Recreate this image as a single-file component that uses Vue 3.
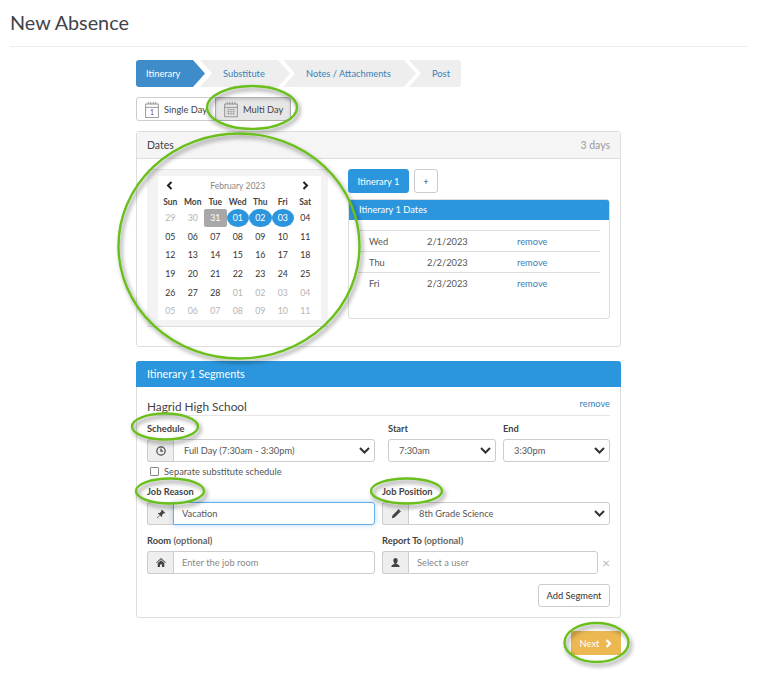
<template>
  <div class="page">
    <h1 class="title">New Absence</h1>

    <div class="main">
      <div class="wizard">
        <div
          v-for="(step, i) in steps"
          :key="step.label"
          class="step"
          :class="{ active: i === 0, last: i === steps.length - 1 }"
          :style="{ width: step.width + 'px' }"
        >{{ step.label }}</div>
      </div>

      <div class="toggle">
        <button class="toggle-btn single">
          <svg width="14" height="17" viewBox="0 0 16 20" fill="none" stroke="#888">
            <path d="M.5 3.5h15v16H.5zM.5 7.5h15" />
            <path d="M3.5 1v3M6.5 1v3M9.5 1v3M12.5 1v3" />
            <text x="8" y="17" font-size="8" text-anchor="middle" fill="#555" stroke="none">1</text>
          </svg>
          Single Day
        </button>
        <button class="toggle-btn multi">
          <svg width="14" height="17" viewBox="0 0 16 20" fill="none" stroke="#888">
            <path d="M.5 3.5h15v15H.5zM.5 7.5h15" />
            <path d="M3.5 1v3M6.5 1v3M9.5 1v3M12.5 1v3" />
            <path d="M3 10h10M3 12.5h10M3 15h10M5 9v7.5M8 9v7.5M11 9v7.5" stroke="#aaa" />
          </svg>
          Multi Day
        </button>
      </div>

      <section class="panel dates">
        <header class="panel-head">
          <span>Dates</span>
          <span class="days">3 days</span>
        </header>
        <div class="dates-body">
          <div class="cal-wrap">
            <div class="cal">
              <div class="cal-nav">
                <svg class="chev" width="7" height="9" viewBox="0 0 7 9"><path d="M5.5 1 2 4.5 5.5 8" /></svg>
                <span>February 2023</span>
                <svg class="chev" width="7" height="9" viewBox="0 0 7 9"><path d="M1.5 1 5 4.5 1.5 8" /></svg>
              </div>
              <div class="cal-grid">
                <div v-for="d in weekdays" :key="d" class="dow">{{ d }}</div>
                <div
                  v-for="(c, i) in cells"
                  :key="i"
                  class="day"
                  :class="c.cls"
                >{{ c.text }}</div>
              </div>
            </div>
          </div>

          <div class="itin">
            <div class="tabs">
              <button class="tab on">Itinerary 1</button>
              <button class="tab">+</button>
            </div>
            <div class="itin-panel">
              <div class="itin-head">Itinerary 1 Dates</div>
              <div class="itin-rows">
                <div v-for="r in itinerary" :key="r.date" class="itin-row">
                  <span class="c-day">{{ r.day }}</span>
                  <span class="c-date">{{ r.date }}</span>
                  <a class="link">remove</a>
                </div>
              </div>
            </div>
          </div>
        </div>
      </section>

      <section class="panel segments">
        <header class="seg-head">Itinerary 1 Segments</header>
        <div class="seg-body">
          <div class="school">
            <span>Hagrid High School</span>
            <a class="link">remove</a>
          </div>

          <div class="row sched">
            <div class="field">
              <label>Schedule</label>
              <div class="group">
                <span class="addon">
                  <svg width="10" height="10" viewBox="0 0 12 12" fill="none" stroke="#444" stroke-width="1.4"><circle cx="6" cy="6" r="5" /><path d="M6 3v3.2h2.3" /></svg>
                </span>
                <div class="sel">Full Day (7:30am - 3:30pm)<svg class="caret" width="11" height="7" viewBox="0 0 11 7"><path d="M1 1l4.5 4.5L10 1" /></svg></div>
              </div>
            </div>
            <div class="field">
              <label>Start</label>
              <div class="sel alone">7:30am<svg class="caret" width="11" height="7" viewBox="0 0 11 7"><path d="M1 1l4.5 4.5L10 1" /></svg></div>
            </div>
            <div class="field">
              <label>End</label>
              <div class="sel alone">3:30pm<svg class="caret" width="11" height="7" viewBox="0 0 11 7"><path d="M1 1l4.5 4.5L10 1" /></svg></div>
            </div>
          </div>

          <label class="check"><span class="box"></span>Separate substitute schedule</label>

          <div class="row two reason">
            <div class="field">
              <label>Job Reason</label>
              <div class="group">
                <span class="addon">
                  <svg width="10" height="10" viewBox="0 0 12 12" fill="#444"><path d="M7.2.8l4 4-1 .6-.8-.3L7.3 7l.2 1.8-.8.8-2-2L1.500 11l-.5-.5 3.4-3.2-2-2 .8-.8L4.500 4.700l1.900-2-.2-1z" /></svg>
                </span>
                <input class="focus" value="Vacation" />
              </div>
            </div>
            <div class="field">
              <label>Job Position</label>
              <div class="group">
                <span class="addon">
                  <svg width="10" height="10" viewBox="0 0 12 12" fill="#444"><path d="M8.5 1L11 3.5l-6.800 6.800L1 11l.7-3.200zM9 0l3 3-.7.7-3-3z" /></svg>
                </span>
                <div class="sel">8th Grade Science<svg class="caret" width="11" height="7" viewBox="0 0 11 7"><path d="M1 1l4.5 4.5L10 1" /></svg></div>
              </div>
            </div>
          </div>

          <div class="row two room">
            <div class="field">
              <label>Room <em>(optional)</em></label>
              <div class="group">
                <span class="addon">
                  <svg width="10" height="9" viewBox="0 0 12 11" fill="#444"><path d="M6 0l6 5.500-.7.700L6 1.500.7 6.200 0 5.500zM2 6.200L6 2.700l4 3.500V11H7.200V7.800H4.800V11H2z" /></svg>
                </span>
                <input placeholder="Enter the job room" />
              </div>
            </div>
            <div class="field">
              <label>Report To <em>(optional)</em></label>
              <div class="user-row">
                <div class="group">
                  <span class="addon">
                    <svg width="9" height="10" viewBox="0 0 11 12" fill="#444"><path d="M5.500 0C7.200 0 8.200 1.300 8.200 3c0 1.400-.6 2.700-1.400 3.300v1c1.600.5 3.700 1.200 3.700 2.700v1H.5v-1c0-1.500 2.100-2.200 3.700-2.700v-1C3.400 5.700 2.800 4.400 2.800 3 2.800 1.300 3.800 0 5.500 0z" /></svg>
                  </span>
                  <input placeholder="Select a user" />
                </div>
                <span class="clear">×</span>
              </div>
            </div>
          </div>

          <div class="actions"><button class="add">Add Segment</button></div>
        </div>
      </section>

      <div class="next-row">
        <button class="next">
          Next
          <svg width="7" height="9" viewBox="0 0 7 9" fill="none" stroke="#fff" stroke-width="2.2"><path d="M1.500 1 5 4.500 1.500 8" /></svg>
        </button>
      </div>
    </div>

    <!-- hand-drawn annotations on top of the screenshot -->
    <svg class="marks" width="758" height="675" viewBox="0 0 758 675" fill="none">
      <defs>
        <filter id="sh" x="-20%" y="-20%" width="140%" height="140%">
          <feDropShadow dx="2" dy="3" stdDeviation="2" flood-color="#000" flood-opacity="0.45" />
        </filter>
      </defs>
      <g stroke="#6bbf1f" stroke-width="2.4" filter="url(#sh)">
        <ellipse v-for="m in marks" :key="m.cx" :cx="m.cx" :cy="m.cy" :rx="m.rx" :ry="m.ry" />
      </g>
    </svg>
  </div>
</template>

<script setup>
const steps = [
  { label: 'Itinerary', width: 69 },
  { label: 'Substitute', width: 90 },
  { label: 'Notes / Attachments', width: 133 },
  { label: 'Post', width: 52 }
]

const weekdays = ['Sun', 'Mon', 'Tue', 'Wed', 'Thu', 'Fri', 'Sat']

const labels = [
  '29', '30', '31', '01', '02', '03', '04',
  '05', '06', '07', '08', '09', '10', '11',
  '12', '13', '14', '15', '16', '17', '18',
  '19', '20', '21', '22', '23', '24', '25',
  '26', '27', '28', '01', '02', '03', '04',
  '05', '06', '07', '08', '09', '10', '11'
]

const cells = labels.map((text, i) => {
  let cls = ''
  if (i < 2 || i >= 31) cls = 'muted'
  if (i === 2) cls = 'today'
  if (i >= 3 && i <= 5) cls = 'picked'
  return { text, cls }
})

const itinerary = [
  { day: 'Wed', date: '2/1/2023' },
  { day: 'Thu', date: '2/2/2023' },
  { day: 'Fri', date: '2/3/2023' }
]

const marks = [
  { cx: 252, cy: 107.5, rx: 45, ry: 21.5 },
  { cx: 239, cy: 246, rx: 120.5, ry: 112.5 },
  { cx: 165, cy: 426.5, rx: 33, ry: 13 },
  { cx: 170, cy: 491, rx: 34, ry: 12.5 },
  { cx: 406.5, cy: 491, rx: 35.5, ry: 12.5 },
  { cx: 596.5, cy: 642.5, rx: 32, ry: 19.5 }
]
</script>

<style>
html, body {
  margin: 0;
  background: #fff;
}
</style>

<style scoped>
.page {
  position: relative;
  width: 758px;
  height: 675px;
  overflow: hidden;
  font-family: Lato, "Open Sans", sans-serif;
  font-size: 9.3px;
  color: #444;
  box-sizing: border-box;
}

.title {
  margin: 0 10px;
  padding: 11px 0 0;
  height: 47px;
  box-sizing: border-box;
  border-bottom: 1px solid #eee;
  font-size: 19.8px;
  font-weight: 400;
  line-height: 23px;
  color: #3f444c;
}

.main {
  width: 485px;
  margin: 13px 0 0 136px;
}

.wizard {
  display: flex;
  height: 27px;
}

.step {
  height: 27px;
  line-height: 27px;
  margin-right: -7px;
  padding-left: 23px;
  box-sizing: border-box;
  background: #eee;
  color: #3a7fb8;
  clip-path: polygon(0 0, calc(100% - 12px) 0, 100% 50%, calc(100% - 12px) 100%, 0 100%, 12px 50%);
  white-space: nowrap;
}

.step.active {
  margin-right: -5px;
  padding-left: 10px;
  background: #3f8ccb;
  color: #fff;
  border-radius: 3px 0 0 3px;
  clip-path: polygon(0 0, calc(100% - 12px) 0, 100% 50%, calc(100% - 12px) 100%, 0 100%);
}

.step.last {
  margin-right: 0;
  border-radius: 0 3px 3px 0;
  clip-path: polygon(0 0, 100% 0, 100% 100%, 0 100%, 12px 50%);
}

.toggle {
  display: flex;
  margin-top: 10px;
}

.toggle-btn {
  display: flex;
  align-items: center;
  gap: 5px;
  height: 24px;
  box-sizing: border-box;
  padding: 0 0 0 8px;
  border: 1px solid #ccc;
  background: #fff;
  font: inherit;
  color: #444;
}

.toggle-btn.single {
  width: 80px;
  border-radius: 3px 0 0 3px;
}

.toggle-btn.multi {
  width: 76px;
  margin-left: -1px;
  background: #e6e6e6;
  border-color: #adadad;
  border-radius: 0 3px 3px 0;
  box-shadow: inset 0 2px 3px rgba(0, 0, 0, 0.12);
}

.panel {
  box-sizing: border-box;
  border: 1px solid #ddd;
  border-radius: 3px;
  background: #fff;
}

.dates {
  margin-top: 10px;
  height: 216px;
}

.panel-head {
  display: flex;
  justify-content: space-between;
  align-items: center;
  height: 26px;
  padding: 0 10px;
  background: #f5f5f5;
  border-bottom: 1px solid #ddd;
  font-size: 10.5px;
  color: #444;
}

.days {
  color: #999;
}

.dates-body {
  display: flex;
  gap: 20px;
  padding: 10px 10px 0;
}

.cal-wrap {
  width: 181px;
  height: 158px;
  box-sizing: border-box;
  padding: 6px 0 0 11px;
  background: #f3f3f3;
  border-top: 1px solid #e2e2e2;
  border-bottom: 1px solid #ddd;
}

.cal {
  width: 163px;
  height: 144px;
  background: #fff;
}

.cal-nav {
  display: flex;
  justify-content: space-between;
  align-items: center;
  height: 19px;
  padding: 0 11.5px 0 8px;
  box-sizing: border-box;
  font-size: 8.5px;
  color: #888;
}

.chev {
  fill: none;
  stroke: #222;
  stroke-width: 2;
}

.cal-grid {
  display: grid;
  grid-template-columns: repeat(7, 22.5px);
  grid-template-rows: 13.5px;
  grid-auto-rows: 18.6px;
  padding: 0 1px;
}

.dow {
  display: flex;
  align-items: center;
  justify-content: center;
  font-weight: 700;
  font-size: 8.5px;
  color: #444;
}

.day {
  display: flex;
  align-items: center;
  justify-content: center;
  font-size: 8.8px;
  color: #333;
}

.day.muted {
  color: #b5b5b5;
}

.day.today {
  background: #a8a8a8;
  color: #fff;
  border-radius: 2px;
}

.day.picked {
  background: #2b96dd;
  color: #fff;
  border-radius: 50%;
}

.itin {
  width: 262px;
}

.tabs {
  display: flex;
  gap: 5px;
}

.tab {
  height: 24px;
  width: 24px;
  padding: 0;
  box-sizing: border-box;
  border: 1px solid #ccc;
  border-radius: 3px;
  background: #fff;
  font: inherit;
  color: #444;
}

.tab.on {
  width: 61px;
  background: #2b96dd;
  border-color: #2b96dd;
  color: #fff;
}

.itin-panel {
  margin-top: 6px;
  height: 120px;
  box-sizing: border-box;
  border: 1px solid #ddd;
  border-radius: 3px;
  overflow: hidden;
}

.itin-head {
  height: 20px;
  line-height: 20px;
  padding: 0 10px;
  background: #2b96dd;
  color: #fff;
}

.itin-rows {
  margin: 10px 9px 0;
  border-top: 1px solid #ddd;
}

.itin-row {
  display: flex;
  align-items: center;
  height: 21px;
  box-sizing: border-box;
  padding-left: 11px;
  border-bottom: 1px solid #ddd;
  color: #555;
}

.itin-row:last-child {
  border-bottom: 0;
}

.c-day {
  width: 58px;
}

.c-date {
  width: 90px;
}

.link {
  color: #3a7fb8;
  font-size: 9.3px;
}

.segments {
  margin-top: 14px;
  height: 257px;
}

.seg-head {
  height: 26px;
  line-height: 26px;
  margin: -1px -1px 0;
  padding: 0 11px;
  background: #2b96dd;
  color: #fff;
  font-size: 10.8px;
  border-radius: 3px 3px 0 0;
}

.seg-body {
  padding: 0 10px;
}

.school {
  display: flex;
  justify-content: space-between;
  align-items: flex-start;
  height: 29px;
  padding-top: 11px;
  box-sizing: border-box;
  border-bottom: 1px solid #e5e5e5;
  font-size: 11.8px;
  line-height: 18px;
  color: #444;
}

.school .link {
  line-height: 12px;
  font-size: 9.3px;
}

.row {
  display: grid;
  gap: 7px;
}

.sched {
  margin-top: 5px;
  grid-template-columns: 234px 108px 107px;
}

.sched .field:first-child {
  padding-right: 6px;
}

.two {
  grid-template-columns: 228px 228px;
}

.field {
  min-width: 0;
  box-sizing: border-box;
}

.field label {
  display: block;
  height: 15px;
  line-height: 15px;
  margin-bottom: 3px;
  font-weight: 700;
  color: #444;
}

.field em {
  font-style: normal;
  color: #666;
}

.group {
  display: flex;
  flex: 1;
  height: 23px;
  box-sizing: border-box;
}

.addon {
  display: flex;
  align-items: center;
  justify-content: center;
  flex: 0 0 26px;
  box-sizing: border-box;
  background: #eee;
  border: 1px solid #ccc;
  border-right: 0;
  border-radius: 3px 0 0 3px;
}

.sel, input {
  flex: 1;
  min-width: 0;
  box-sizing: border-box;
  height: 23px;
  padding: 0 8px;
  border: 1px solid #ccc;
  border-radius: 0 3px 3px 0;
  background: #fff;
  font: inherit;
  color: #555;
}

.sel {
  position: relative;
  padding: 0 10px;
  line-height: 21px;
}

.sel.alone {
  border-radius: 3px;
}

.caret {
  position: absolute;
  right: 4px;
  top: 7px;
  fill: none;
  stroke: #333;
  stroke-width: 2;
}

input::placeholder {
  color: #888;
  opacity: 1;
}

input.focus {
  border-color: #66afe9;
  box-shadow: 0 0 5px rgba(102, 175, 233, 0.5);
}

.check {
  display: flex;
  align-items: center;
  gap: 5px;
  height: 14px;
  margin-top: 2px;
  color: #555;
}

.box {
  width: 7px;
  height: 7px;
  margin-left: 3px;
  border: 1px solid #888;
  border-radius: 1px;
}

.reason {
  margin-top: 6px;
}

.room {
  margin-top: 8px;
}

.user-row {
  display: flex;
  align-items: center;
}

.clear {
  width: 12px;
  text-align: right;
  font-size: 14px;
  color: #bbb;
}

.actions {
  display: flex;
  justify-content: flex-end;
  margin-top: 10px;
}

.add {
  width: 72px;
  height: 23px;
  padding: 0;
  box-sizing: border-box;
  border: 1px solid #ccc;
  border-radius: 3px;
  background: #fff;
  font: inherit;
  color: #333;
}

.next-row {
  display: flex;
  justify-content: flex-end;
  margin-top: 13px;
}

.next {
  display: flex;
  align-items: center;
  justify-content: center;
  gap: 6px;
  width: 50px;
  height: 24px;
  padding: 0;
  border: 0;
  border-radius: 2px;
  background: #ebb852;
  color: #fff;
  font: inherit;
}

.marks {
  position: absolute;
  left: 0;
  top: 0;
  pointer-events: none;
}
</style>
